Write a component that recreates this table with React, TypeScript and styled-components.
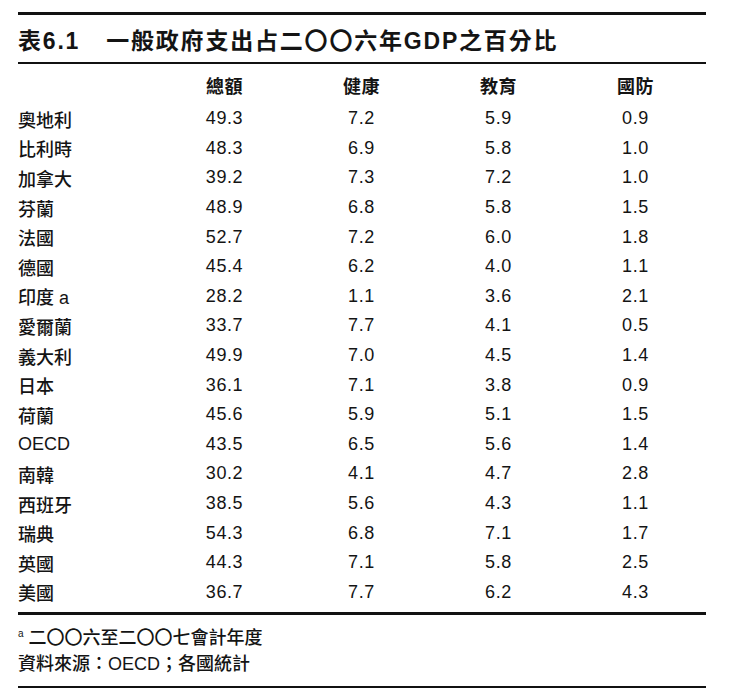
import React from 'react';
import styled, { createGlobalStyle } from 'styled-components';

const GlobalStyle = createGlobalStyle`
  html, body {
    margin: 0;
    padding: 0;
    background: #ffffff;
  }
  body {
    font-family: "Liberation Sans", "Noto Sans CJK TC", "Noto Sans CJK SC", sans-serif;
    color: #141414;
  }
`;

const Page = styled.div`
  width: 730px;
  height: 697px;
  padding: 12px 24px 0 18px;
  box-sizing: border-box;
  display: flex;
  flex-direction: column;
`;

const Rule = styled.div<{ $gapTop?: number }>`
  height: 2.5px;
  background: #111;
  margin-top: ${p => p.$gapTop ?? 0}px;
`;

const TitleBar = styled.div`
  height: 47px;
  display: flex;
  align-items: center;
  gap: 26px;
  font-size: 23px;
  font-weight: bold;
  letter-spacing: 1.8px;
  padding-top: 2px;
  box-sizing: border-box;
`;

const Table = styled.div`
  display: grid;
  grid-template-columns: 138px repeat(4, 137px);
  grid-template-rows: 40px;
  grid-auto-rows: 29.6px;
  font-size: 18px;
`;

const Cell = styled.div<{ $head?: boolean; $label?: boolean }>`
  display: flex;
  align-items: center;
  justify-content: ${p => (p.$label ? 'flex-start' : 'center')};
  font-weight: ${p => (p.$head ? 'bold' : p.$label ? 500 : 'normal')};
  letter-spacing: ${p => (p.$label ? '0' : '0.6px')};
  padding-top: ${p => (p.$head ? '1px' : '0')};
  white-space: nowrap;
`;

const Notes = styled.div`
  padding-top: 10px;
  display: flex;
  flex-direction: column;
  font-size: 18px;
  font-weight: 500;
  line-height: 26px;
`;

const Sup = styled.sup`
  font-size: 10px;
  line-height: 0;
  vertical-align: 7px;
  margin-right: 5px;
`;

const heads = ['總額', '健康', '教育', '國防'];

const rows: [string, string, string, string, string][] = [
  ['奧地利', '49.3', '7.2', '5.9', '0.9'],
  ['比利時', '48.3', '6.9', '5.8', '1.0'],
  ['加拿大', '39.2', '7.3', '7.2', '1.0'],
  ['芬蘭', '48.9', '6.8', '5.8', '1.5'],
  ['法國', '52.7', '7.2', '6.0', '1.8'],
  ['德國', '45.4', '6.2', '4.0', '1.1'],
  ['印度 a', '28.2', '1.1', '3.6', '2.1'],
  ['愛爾蘭', '33.7', '7.7', '4.1', '0.5'],
  ['義大利', '49.9', '7.0', '4.5', '1.4'],
  ['日本', '36.1', '7.1', '3.8', '0.9'],
  ['荷蘭', '45.6', '5.9', '5.1', '1.5'],
  ['OECD', '43.5', '6.5', '5.6', '1.4'],
  ['南韓', '30.2', '4.1', '4.7', '2.8'],
  ['西班牙', '38.5', '5.6', '4.3', '1.1'],
  ['瑞典', '54.3', '6.8', '7.1', '1.7'],
  ['英國', '44.3', '7.1', '5.8', '2.5'],
  ['美國', '36.7', '7.7', '6.2', '4.3'],
];

export default function App() {
  return (
    <>
      <GlobalStyle />
      <Page>
        <Rule />
        <TitleBar>
          <span>表6.1</span>
          <span>一般政府支出占二〇〇六年GDP之百分比</span>
        </TitleBar>
        <Rule />
        <Table>
          <Cell $label />
          {heads.map(h => (
            <Cell key={h} $head>{h}</Cell>
          ))}
          {rows.map(r =>
            r.map((v, i) => (
              <Cell key={r[0] + i} $label={i === 0}>{v}</Cell>
            ))
          )}
        </Table>
        <Rule $gapTop={5} />
        <Notes>
          <div><Sup>a</Sup>二〇〇六至二〇〇七會計年度</div>
          <div>資料來源：OECD；各國統計</div>
        </Notes>
        <Rule $gapTop={9} />
      </Page>
    </>
  );
}
